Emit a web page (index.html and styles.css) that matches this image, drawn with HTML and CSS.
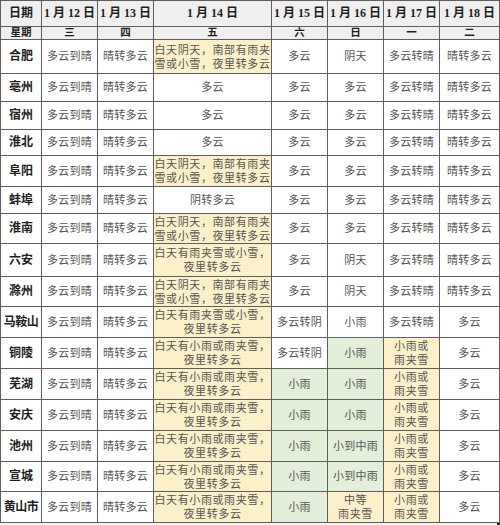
FILE: index.html
```html
<!DOCTYPE html>
<html lang="zh-CN">
<head>
<meta charset="utf-8">
<title>安徽天气预报</title>
<link rel="stylesheet" href="styles.css">
</head>
<body>
<div class="frame">
<table class="wx">
  <colgroup>
    <col class="c-city"><col class="c-day"><col class="c-day"><col class="c-wide"><col class="c-day"><col class="c-day"><col class="c-day"><col class="c-last">
  </colgroup>
  <tr class="h1">
    <th>日期</th><th>1 月 12 日</th><th>1 月 13 日</th><th>1 月 14 日</th><th>1 月 15 日</th><th>1 月 16 日</th><th>1 月 17 日</th><th>1 月 18 日</th>
  </tr>
  <tr class="h2">
    <th>星期</th><th>三</th><th>四</th><th>五</th><th>六</th><th>日</th><th>一</th><th>二</th>
  </tr>
  <tr class="r34">
    <th>合肥</th><td>多云到晴</td><td>晴转多云</td><td class="y two">白天阴天，南部有雨夹<br>雪或小雪，夜里转多云</td><td>多云</td><td>阴天</td><td>多云转晴</td><td>晴转多云</td>
  </tr>
  <tr class="r28">
    <th>亳州</th><td>多云到晴</td><td>晴转多云</td><td>多云</td><td>多云</td><td>多云</td><td>多云转晴</td><td>晴转多云</td>
  </tr>
  <tr class="r28">
    <th>宿州</th><td>多云到晴</td><td>晴转多云</td><td>多云</td><td>多云</td><td>多云</td><td>多云转晴</td><td>晴转多云</td>
  </tr>
  <tr class="r26">
    <th>淮北</th><td>多云到晴</td><td>晴转多云</td><td>多云</td><td>多云</td><td>多云</td><td>多云转晴</td><td>晴转多云</td>
  </tr>
  <tr class="r31">
    <th>阜阳</th><td>多云到晴</td><td>晴转多云</td><td class="y two">白天阴天，南部有雨夹<br>雪或小雪，夜里转多云</td><td>多云</td><td>多云</td><td>多云转晴</td><td>晴转多云</td>
  </tr>
  <tr class="r27">
    <th>蚌埠</th><td>多云到晴</td><td>晴转多云</td><td>阴转多云</td><td>多云</td><td>多云</td><td>多云转晴</td><td>晴转多云</td>
  </tr>
  <tr class="r30">
    <th>淮南</th><td>多云到晴</td><td>晴转多云</td><td class="y two">白天阴天，南部有雨夹<br>雪或小雪，夜里转多云</td><td>多云</td><td>多云</td><td>多云转晴</td><td>晴转多云</td>
  </tr>
  <tr class="r33">
    <th>六安</th><td>多云到晴</td><td>晴转多云</td><td class="y two">白天有雨夹雪或小雪，<br>夜里转多云</td><td>多云</td><td>阴天</td><td>多云转晴</td><td>晴转多云</td>
  </tr>
  <tr class="r30">
    <th>滁州</th><td>多云到晴</td><td>晴转多云</td><td class="y two">白天阴天，南部有雨夹<br>雪或小雪，夜里转多云</td><td>多云</td><td>阴天</td><td>多云转晴</td><td>晴转多云</td>
  </tr>
  <tr class="r31">
    <th class="narrow">马鞍山</th><td>多云到晴</td><td>晴转多云</td><td class="y two">白天有雨夹雪或小雪，<br>夜里转多云</td><td>多云转阴</td><td>小雨</td><td>多云转晴</td><td>多云</td>
  </tr>
  <tr class="r31">
    <th>铜陵</th><td>多云到晴</td><td>晴转多云</td><td class="y two">白天有小雨或雨夹雪，<br>夜里转多云</td><td>多云转阴</td><td class="g">小雨</td><td class="y two">小雨或<br>雨夹雪</td><td>多云</td>
  </tr>
  <tr class="r31">
    <th>芜湖</th><td>多云到晴</td><td>晴转多云</td><td class="y two">白天有小雨或雨夹雪，<br>夜里转多云</td><td class="g">小雨</td><td class="g">小雨</td><td class="y two">小雨或<br>雨夹雪</td><td>多云</td>
  </tr>
  <tr class="r31">
    <th>安庆</th><td>多云到晴</td><td>晴转多云</td><td class="y two">白天有小雨或雨夹雪，<br>夜里转多云</td><td class="g">小雨</td><td class="g">小雨</td><td class="y two">小雨或<br>雨夹雪</td><td>多云</td>
  </tr>
  <tr class="r31">
    <th>池州</th><td>多云到晴</td><td>晴转多云</td><td class="y two">白天有小雨或雨夹雪，<br>夜里转多云</td><td class="g">小雨</td><td class="g">小到中雨</td><td class="y two">小雨或<br>雨夹雪</td><td>多云</td>
  </tr>
  <tr class="r30">
    <th>宣城</th><td>多云到晴</td><td>晴转多云</td><td class="y two">白天有小雨或雨夹雪，<br>夜里转多云</td><td class="g">小雨</td><td class="g">小到中雨</td><td class="y two">小雨或<br>雨夹雪</td><td>多云</td>
  </tr>
  <tr class="r31">
    <th class="narrow">黄山市</th><td>多云到晴</td><td>晴转多云</td><td class="y two">白天有小雨或雨夹雪，<br>夜里转多云</td><td class="g">小雨</td><td class="y two">中等<br>雨夹雪</td><td class="y two">小雨或<br>雨夹雪</td><td>多云</td>
  </tr>
</table>
</div>
</body>
</html>
```

FILE: styles.css
```css
html, body {
  margin: 0;
  padding: 0;
  background: #ffffff;
}

.frame {
  width: 500px;
  height: 525px;
  box-sizing: border-box;
  border-right: 3px solid #2e2e2e;
  background: #f4f4f4;
}

.wx {
  border-collapse: collapse;
  table-layout: fixed;
  width: 497px;
  background: #ffffff;
  font-family: "Liberation Serif", "Noto Sans CJK SC", serif;
}

.c-city { width: 41px; }
.c-day { width: 56px; }
.c-wide { width: 118px; }
.c-last { width: 60px; }

.wx th,
.wx td {
  border: 1px solid #5e5e5e;
  padding: 0;
  text-align: center;
  vertical-align: middle;
  white-space: nowrap;
}

.wx th {
  font-size: 12px;
  font-weight: 700;
  color: #1e1e1e;
  line-height: 13px;
  background: #ffffff;
}

.wx td {
  font-size: 11px;
  color: #555555;
  line-height: 13px;
  letter-spacing: 0.3px;
}

.h1 th {
  background: #efefef;
  height: 25px;
}

.h2 th {
  background: #efefef;
  height: 12px;
  font-size: 10.5px;
  line-height: 12px;
}

.wx .narrow {
  letter-spacing: -0.5px;
}

.r34 > * { height: 33px; }
.r33 > * { height: 32px; }
.r31 > * { height: 30px; }
.r30 > * { height: 29px; }
.r28 > * { height: 27px; }
.r27 > * { height: 26px; }
.r26 > * { height: 25px; }

.wx td.y {
  background: #fcf0c9;
}

.wx td.g {
  background: #e3efd9;
}

.wx td.two {
  line-height: 14px;
  letter-spacing: 0.6px;
}
```
